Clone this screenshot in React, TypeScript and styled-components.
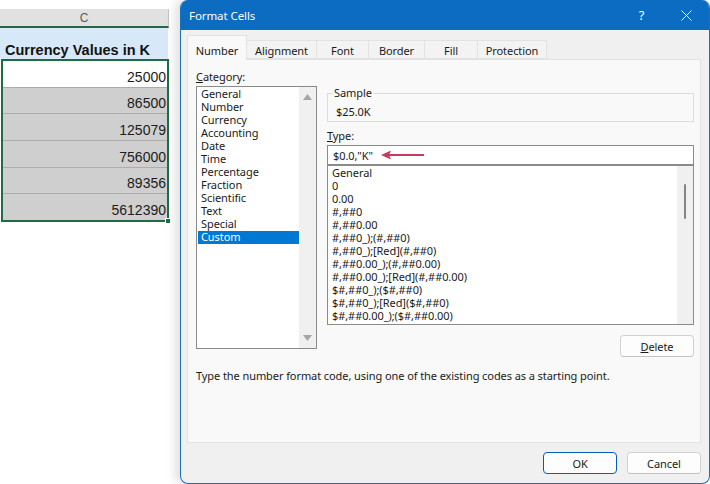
import React from 'react'
import styled, { createGlobalStyle } from 'styled-components'

const GlobalStyle = createGlobalStyle`
  html, body {
    margin: 0;
    padding: 0;
    background: #ffffff;
  }
  body {
    font-family: "Noto Sans", "Segoe UI", sans-serif;
    color: #1a1a1a;
  }
  * {
    box-sizing: border-box;
  }
`

const Screen = styled.div`
  display: flex;
  width: 710px;
  height: 484px;
  overflow: hidden;
  background: #ffffff;
`

/* ---------- spreadsheet ---------- */

const Sheet = styled.div`
  width: 180px;
  flex: none;
  padding-top: 9px;
  font-family: "Liberation Sans", Arial, sans-serif;
`

const ColumnHeader = styled.div`
  width: 169px;
  height: 19px;
  display: flex;
  align-items: center;
  justify-content: center;
  background: #e1e1e1;
  border-right: 1px solid #c4c4c4;
  border-bottom: 2px solid #27684a;
  font-size: 12px;
  color: #5c5c5c;
`

const HeadingCell = styled.div`
  width: 168px;
  height: 31px;
  display: flex;
  align-items: flex-end;
  padding: 0 0 1px 5px;
  background: #d7e8f8;
  font-size: 14.5px;
  line-height: 16px;
  font-weight: bold;
  color: #111;
`

const Selection = styled.div`
  position: relative;
  width: 168px;
  height: 163px;
  margin-left: 1px;
  display: flex;
  flex-direction: column;
  border: 2px solid #1f6b45;
`

const Cell = styled.div<{ $selected?: boolean }>`
  flex: 1;
  display: flex;
  align-items: flex-end;
  justify-content: flex-end;
  padding: 0 1px 1px 0;
  background: ${p => (p.$selected ? '#cfcfcf' : '#ffffff')};
  border-top: 1px solid ${p => (p.$selected ? '#acacac' : 'transparent')};
  font-size: 14px;
  line-height: 17px;
  color: #1c1c1c;

  &:first-child {
    border-top: none;
  }
`

const FillHandle = styled.span`
  position: absolute;
  right: -4px;
  bottom: -4px;
  width: 6px;
  height: 6px;
  background: #1f6b45;
  border: 1px solid #ffffff;
`

/* ---------- dialog ---------- */

const Dialog = styled.div`
  width: 530px;
  flex: none;
  display: flex;
  flex-direction: column;
  background: #f0f0f0;
  border: 1px solid #1a6fbd;
  border-top: none;
  border-radius: 8px;
  overflow: hidden;
  box-shadow: -5px 0 10px rgba(0, 0, 0, 0.12);
  letter-spacing: -0.08px;
`

const TitleBar = styled.div`
  height: 30px;
  flex: none;
  display: flex;
  align-items: center;
  padding-left: 8px;
  background: #0b6cc1;
  color: #ffffff;
  font-size: 11.5px;
`

const Title = styled.span`
  flex: 1;
`

const CaptionButton = styled.div`
  width: 45px;
  height: 30px;
  display: flex;
  align-items: center;
  justify-content: center;
  font-size: 13px;
  color: #ffffff;
`

const Body = styled.div`
  flex: 1;
  display: flex;
  flex-direction: column;
  padding: 5px 8px 0 6px;
`

const TabRow = styled.div`
  display: flex;
  align-items: flex-end;
  height: 24px;
`

const Tab = styled.div<{ $active?: boolean; $width: number }>`
  position: relative;
  z-index: 1;
  width: ${p => p.$width}px;
  height: ${p => (p.$active ? 25 : 19)}px;
  margin-bottom: ${p => (p.$active ? -1 : 0)}px;
  display: flex;
  align-items: center;
  justify-content: center;
  padding-top: ${p => (p.$active ? 5 : 2)}px;
  background: ${p => (p.$active ? '#f9f9f9' : '#f3f3f3')};
  border: 1px solid #e2e2e2;
  border-bottom: ${p => (p.$active ? 'none' : '1px solid #e2e2e2')};
  border-left: ${p => (p.$active ? '1px solid #e2e2e2' : 'none')};
  font-size: 11px;
  color: #1a1a1a;
`

const Panel = styled.div`
  height: 384px;
  display: flex;
  flex-direction: column;
  padding: 10px 6px 0 8px;
  background: #f9f9f9;
  border: 1px solid #e2e2e2;
  font-size: 11px;
`

const Columns = styled.div`
  display: flex;
  gap: 10px;
  align-items: flex-start;
`

const LeftColumn = styled.div`
  width: 121px;
  display: flex;
  flex-direction: column;
`

const RightColumn = styled.div`
  flex: 1;
  display: flex;
  flex-direction: column;
`

const FieldLabel = styled.div<{ $gap?: number }>`
  line-height: 14px;
  margin-top: ${p => p.$gap ?? 0}px;
  margin-bottom: 2px;
`

const ListBox = styled.div<{ $height: number }>`
  position: relative;
  height: ${p => p.$height}px;
  display: flex;
  background: #ffffff;
  border: 1px solid #8a8a8a;
  overflow: hidden;
`

const ListItems = styled.div<{ $top: number; $left: number }>`
  flex: 1;
  padding-top: ${p => p.$top}px;
  padding-left: ${p => p.$left}px;
  overflow: hidden;
`

const ListItem = styled.div<{ $selected?: boolean }>`
  height: 13px;
  line-height: 12px;
  padding-left: 3px;
  white-space: nowrap;
  background: ${p => (p.$selected ? '#0078d4' : 'transparent')};
  color: ${p => (p.$selected ? '#ffffff' : '#1a1a1a')};
`

const ArrowScroll = styled.div`
  width: 17px;
  flex: none;
  display: flex;
  flex-direction: column;
  justify-content: space-between;
  align-items: center;
  padding: 7px 0 7px;
  background: #f0f0f0;
`

const ThinScroll = styled.div`
  width: 16px;
  flex: none;
  display: flex;
  justify-content: center;
  padding-top: 18px;
  background: #f0f0f0;
`

const Thumb = styled.div`
  width: 2px;
  height: 35px;
  border-radius: 1px;
  background: #858585;
`

const SampleBox = styled.fieldset`
  margin: 16px 0 0;
  padding: 5px 6px 2px 8px;
  border: 1px solid #dddddd;
  min-width: 0;
`

const SampleLegend = styled.legend`
  padding: 0 1px;
  margin-left: -3px;
  line-height: 14px;
`

const SampleValue = styled.div`
  line-height: 14px;
`

const TypeInput = styled.div`
  position: relative;
  height: 20px;
  display: flex;
  align-items: center;
  padding-left: 5px;
  background: #ffffff;
  border: 1px solid #8a8a8a;
`

const Pointer = styled.svg`
  position: absolute;
  left: 53px;
  top: 4px;
`

const Button = styled.button<{ $primary?: boolean }>`
  width: 74px;
  height: 22px;
  padding: 0;
  border-radius: 4px;
  border: 1px solid ${p => (p.$primary ? '#005fb8' : '#d2d2d2')};
  border-bottom-color: ${p => (p.$primary ? '#005fb8' : '#c2c2c2')};
  background: #fdfdfd;
  font-family: "Noto Sans", "Segoe UI", sans-serif;
  font-size: 11px;
  letter-spacing: -0.08px;
  color: #1a1a1a;
`

const DeleteRow = styled.div`
  display: flex;
  justify-content: flex-end;
  margin-top: 10px;
`

const Hint = styled.div`
  margin-top: 12px;
  line-height: 14px;
`

const Footer = styled.div`
  display: flex;
  justify-content: flex-end;
  gap: 10px;
  padding-top: 9px;
`

const tabs = [
  { label: 'Number', width: 60 },
  { label: 'Alignment', width: 70 },
  { label: 'Font', width: 52 },
  { label: 'Border', width: 56 },
  { label: 'Fill', width: 53 },
  { label: 'Protection', width: 69 },
]

const categories = [
  'General', 'Number', 'Currency', 'Accounting', 'Date', 'Time',
  'Percentage', 'Fraction', 'Scientific', 'Text', 'Special', 'Custom',
]

const formats = [
  'General',
  '0',
  '0.00',
  '#,##0',
  '#,##0.00',
  '#,##0_);(#,##0)',
  '#,##0_);[Red](#,##0)',
  '#,##0.00_);(#,##0.00)',
  '#,##0.00_);[Red](#,##0.00)',
  '$#,##0_);($#,##0)',
  '$#,##0_);[Red]($#,##0)',
  '$#,##0.00_);($#,##0.00)',
]

const values = ['25000', '86500', '125079', '756000', '89356', '5612390']

const Triangle = ({ up }: { up?: boolean }) => (
  <svg width="9" height="6" viewBox="0 0 9 6">
    <path d={up ? 'M0 6 L4.5 0 L9 6 Z' : 'M0 0 L4.5 6 L9 0 Z'} fill="#a6a6a6" />
  </svg>
)

const App = () => (
  <Screen>
    <GlobalStyle />
    <Sheet>
      <ColumnHeader>C</ColumnHeader>
      <HeadingCell>Currency Values in K</HeadingCell>
      <Selection>
        {values.map((v, i) => (
          <Cell key={v} $selected={i > 0}>{v}</Cell>
        ))}
        <FillHandle />
      </Selection>
    </Sheet>

    <Dialog>
      <TitleBar>
        <Title>Format Cells</Title>
        <CaptionButton>?</CaptionButton>
        <CaptionButton>
          <svg width="11" height="11" viewBox="0 0 11 11">
            <path d="M0.5 0.5 L10.5 10.5 M10.5 0.5 L0.5 10.5" stroke="#ffffff" strokeWidth="1" />
          </svg>
        </CaptionButton>
      </TitleBar>

      <Body>
        <TabRow>
          {tabs.map((t, i) => (
            <Tab key={t.label} $active={i === 0} $width={t.width}>{t.label}</Tab>
          ))}
        </TabRow>

        <Panel>
          <Columns>
            <LeftColumn>
              <FieldLabel><u>C</u>ategory:</FieldLabel>
              <ListBox $height={263}>
                <ListItems $top={1} $left={1}>
                  {categories.map(c => (
                    <ListItem key={c} $selected={c === 'Custom'}>{c}</ListItem>
                  ))}
                </ListItems>
                <ArrowScroll>
                  <Triangle up />
                  <Triangle />
                </ArrowScroll>
              </ListBox>
            </LeftColumn>

            <RightColumn>
              <SampleBox>
                <SampleLegend>Sample</SampleLegend>
                <SampleValue>$25.0K</SampleValue>
              </SampleBox>

              <FieldLabel $gap={7}><u>T</u>ype:</FieldLabel>
              <TypeInput>
                $0.0,"K"
                <Pointer width="44" height="10" viewBox="0 0 44 10">
                  <path d="M3 5 H43" stroke="#c73a5c" strokeWidth="2" />
                  <path d="M0 5 L10 0.5 L8 5 L10 9.5 Z" fill="#c73a5c" />
                </Pointer>
              </TypeInput>
              <ListBox $height={160}>
                <ListItems $top={1} $left={1}>
                  {formats.map(f => (
                    <ListItem key={f}>{f}</ListItem>
                  ))}
                </ListItems>
                <ThinScroll>
                  <Thumb />
                </ThinScroll>
              </ListBox>

              <DeleteRow>
                <Button><u>D</u>elete</Button>
              </DeleteRow>
            </RightColumn>
          </Columns>

          <Hint>Type the number format code, using one of the existing codes as a starting point.</Hint>
        </Panel>

        <Footer>
          <Button $primary>OK</Button>
          <Button>Cancel</Button>
        </Footer>
      </Body>
    </Dialog>
  </Screen>
)

export default App
